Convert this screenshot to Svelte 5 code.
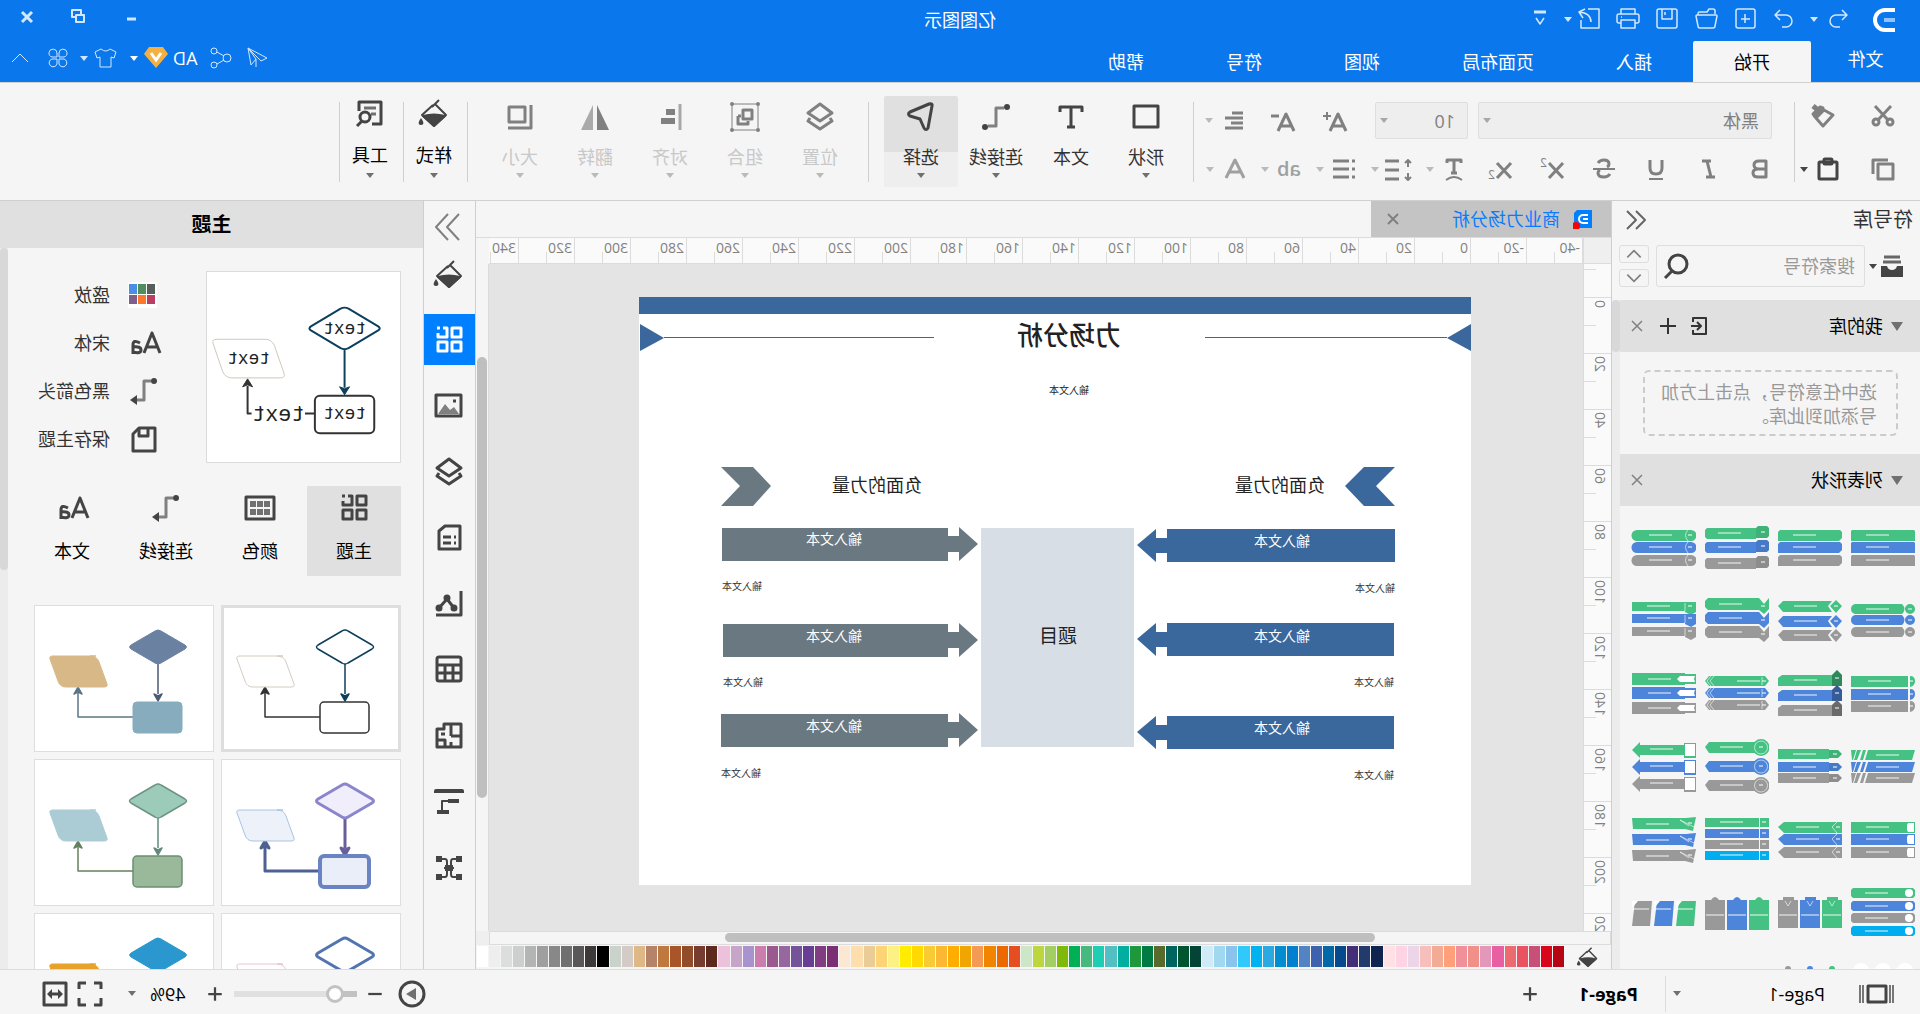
<script>
  const G = "#45c283";
  const B = "#4d85da";
  const N = "#999999";
  const C = "#00aeef";

  const icons = {
    undo: '<path d="M7 3 2 8l5 5M3 8h10a6 6 0 0 1 0 12H9"/>',
    redo: '<path d="m15 3 5 5-5 5M19 8H9a6 6 0 0 0 0 12h4"/>',
    add: '<rect x="2" y="2" width="19" height="19" rx="2"/><path d="M12 7v9M7 12h9"/>',
    folder: '<path d="M3 7V4q0-2 2-2h4l2 3h8q1 0 1 2v1M1 9q0-1 1-1h19q1 0 1 1l-2 10q0 2-2 2H5q-2 0-2-2z"/>',
    save: '<rect x="2" y="2" width="20" height="19" rx="2"/><path d="M7 2v10h10V2M14 5v3"/>',
    print: '<path d="M5 7V2h14v5M5 16H3q-2 0-2-2V9q0-2 2-2h18q2 0 2 2v5q0 2-2 2h-2"/><rect x="5" y="13" width="14" height="8"/><path d="M18 10h1"/>',
    export: '<path d="M13 2H2v19h18V13M16 2l6 3-4 6M22 5Q10 6 10 15"/>',
    more: '<path d="M6 5h12" stroke-width="3"/><path d="m8 11 4 6 4-6"/>',
    min: '<path d="M7 14h9" stroke-width="3"/>',
    restore: '<path d="M10 9V5h9v7h-4" stroke-width="2"/><rect x="7" y="10" width="8" height="7" stroke-width="2"/>',
    close: '<path d="m7 7 10 10M17 7 7 17"/>',
    send: '<path d="M21 2 2 12l6 3zM21 2l-3 17-5-6v8M13 13l8-11"/>',
    share: '<circle cx="6" cy="12" r="4"/><circle cx="19" cy="5" r="3"/><circle cx="19" cy="19" r="3"/><path d="m9 10 7-4M9 14l7 4"/>',
    shirt: '<path d="M8 3 2 6l2 6 3-1v10h11V11l3 1 2-6-6-3q-5 4-9 0z"/>',
    apps: '<path d="M11 11H6a4 4 0 1 1 5-4zM13 11V7a4 4 0 1 1 5 4zM11 13v5a4 4 0 1 1-5-5zM13 13h5a4 4 0 1 1-5 5z"/>',
    up: '<path d="m4 16 8-8 8 8"/>',
    down: '<path d="m4 8 8 8 8-8"/>',
    cut: '<path d="m4 3 13 14M20 3 7 17"/><circle cx="5" cy="19" r="3"/><circle cx="19" cy="19" r="3"/>',
    copy: '<rect x="2" y="7" width="15" height="15"/><path d="M7 3h15v14"/>',
    brush: '<path d="m2 12 9-5 8 8-7 8z"/><path d="m17 7 5-4" stroke-width="5"/><path d="m12 5 8 9 2-3-7-7z" fill="currentColor"/>',
    paste: '<rect x="3" y="5" width="18" height="17" rx="1"/><rect x="8" y="2" width="8" height="5" rx="1"/>',
    bold: '<path d="M6 4h7q5 0 5 4t-5 4H6zM6 12h8q5 0 5 4t-5 4H6z"/>',
    italic: '<path d="M9 4h9M5 20h9M13 4 9 20"/>',
    underline: '<path d="M6 3v8q0 6 6 6t6-6V3"/><path d="M5 22h14" stroke-width="2"/>',
    strike: '<path d="M18 6q-2-3-6-3-5 0-5 4 0 2 2 3M6 17q2 3 6 3 6 0 6-4 0-2-2-3"/><path d="M1 12h22" stroke-width="2"/>',
    cross: '<path d="m1 6 14 15M15 6 1 21"/>',
    textArc: '<path d="M5 6V3h14v3M12 3v13M9 16h6"/><path d="M4 23q8-6 16 0" stroke-width="2"/>',
    spacing: '<path d="M12 4h14M12 13h14M12 22h14"/><path d="M3 3v7M3 16v7M0 6l3-3 3 3M0 20l3 3 3-3" stroke-width="2"/>',
    bullets: '<path d="M7 4h16M7 12h16M7 20h16"/><path d="M1 4h3M1 12h3M1 20h3"/>',
    alignText: '<path d="M2 4h11M2 9h18M2 14h12M2 19h18"/>',
    letter: '<path d="m2 21 9-18 9 18M6 15h10"/>',
    bigger: '<path d="m1 22 8-17 8 17M4 17h10"/><path d="M16 7h8M20 3v8" stroke-width="2"/>',
    smaller: '<path d="m1 22 8-17 8 17M4 17h10"/><path d="M16 7h8"/>',
    shape: '<rect x="2" y="3" width="24" height="21"/>',
    text: '<path d="M3 9V4h22v5M14 4v20M10 24h8"/>',
    connector: '<path d="M6 5h8v18h8" stroke="#808080"/><circle cx="3" cy="4" r="3" fill="currentColor" stroke="none"/><circle cx="25" cy="24" r="3" fill="currentColor" stroke="none"/>',
    select: '<path d="M3 3 7 25q2 3 4 0l4-9 10-3q3-2 0-4L6 1q-4-1-3 2z"/>',
    layer: '<path d="m14 1 12 9-12 8L2 10z"/><path d="m4 15-2 3 12 8 12-8-2-3"/>',
    group: '<rect x="1" y="1" width="26" height="26" stroke-width="1"/><g fill="#f5f5f5" stroke-width="2"><circle cx="1" cy="1" r="1"/><circle cx="27" cy="1" r="1"/><circle cx="1" cy="27" r="1"/><circle cx="27" cy="27" r="1"/></g><rect x="7" y="7" width="9" height="9"/><path d="M21 13v8H11v-3M18 13h3"/>',
    align: '<path d="M4 1v26" stroke="#a8a8a8"/><path d="M9 9h9M9 18h14" stroke-width="6"/>',
    flip: '<path d="M0 27 12 2v25z" fill="currentColor" stroke="none"/><path d="M28 27 16 2v25z" fill="#aaaaaa" stroke="none"/>',
    size: '<rect x="9" y="4" width="16" height="15"/><path d="M3 2v23h23"/>',
    bucket: '<g stroke-width="2"><path d="M9 1l7 7M13 5 2 16l12 11 12-11L15 6"/><path d="M3 17q11-3 22 0L14 27z" fill="currentColor"/></g><path d="M27 19q5 7 0 7t0-7z" fill="currentColor" stroke="none"/>',
    tools: '<path d="M12 25H3V3h22v9"/><path d="M8 9h12M8 15h5" stroke="#707070"/><circle cx="19" cy="18" r="5"/><path d="m22 22 5 5"/>',
    library: '<path d="M4 3h16M3 8h18" stroke="#666666"/><path d="M1 12h6q1 4 5 4t5-4h6v11H1z" fill="currentColor" stroke="none"/>',
    search: '<circle cx="11" cy="10" r="9"/><path d="m17 17 7 7"/>',
    left2: '<path d="m12 3-9 9 9 9M21 3l-9 9 9 9"/>',
    right2: '<path d="m4 1 12 13L4 27M15 1l12 13-12 13"/>',
    importLib: '<path d="M18 8V4H5v16h13v-4M20 12h-9M14 8l-4 4 4 4"/>',
    thinPlus: '<path d="M12 4v16M4 12h16"/>',
    plus: '<path d="M12 3v18M3 12h18"/>',
    minus: '<path d="M3 12h18"/>',
    grid4: '<rect x="2" y="2" width="9" height="9"/><rect x="2" y="16" width="9" height="9"/><rect x="16" y="16" width="9" height="9"/><path d="M20 2h-4v9h9V7M23 2h3"/>',
    picture: '<rect x="2" y="3" width="25" height="21"/><path d="m4 22 5-7 4 3 5-6 7 10z" fill="#808080" stroke="none"/><path d="M7 9h3"/>',
    doc: '<path d="M3 2h15l6 5v18H3z"/><path d="M7 13h2M12 13h8M7 19h2M12 19h8"/>',
    chart: '<path d="M2 1v24h25"/><path d="m9 18 7-9 8 9"/><g fill="currentColor"><circle cx="9" cy="18" r="2"/><circle cx="16" cy="8" r="2"/><circle cx="24" cy="18" r="2"/></g>',
    table: '<rect x="2" y="1" width="24" height="24" rx="2"/><path d="M2 9h24M2 17h24M10 9v16M18 9v16"/>',
    plan: '<path d="M2 2h17v5h7v18H2zM12 2v12M2 14h10M12 20v5M18 25v-7h8M18 12h4"/>',
    org: '<path d="M1 5V3h26v2" stroke-width="4"/><path d="M4 13h11M14 24h12" stroke-width="4"/><path d="M15 13h6v10" stroke-width="2"/>',
    network: '<path d="M7 5h3q2 0 2 3v12q0 3-2 3H7M21 5h-3q-2 0-2 3v12q0 3 2 3h3M9 14h10" stroke-width="2"/><path d="M1 5h6M1 23h6M21 5h6M21 23h6M10 14h8" stroke-width="6"/>',
    connArrow: '<path d="M7 4h7v19h7" stroke="#808080"/><circle cx="4" cy="4" r="3" fill="currentColor" stroke="none"/><path d="m21 18 7 5-7 5z" fill="currentColor" stroke="none"/>',
    fontAa: '<path d="m-2 24 8-20 8 20M1 18h10M18 14q7-4 7 2v9M25 18q-8-1-8 3t8 2"/>',
    saveTheme: '<path d="M3 3h16l6 6v17H3z"/><path d="M10 3v8h9V3"/>',
    swatches: '<rect x="1" y="1" width="29" height="26" fill="#ffffff" stroke="none"/><g stroke="none"><path d="M3 3h8v10H3z" fill="#555f5e"/><path d="M12 3h8v10h-8z" fill="#4e8f5b"/><path d="M21 3h8v10h-8z" fill="#4a90e2"/><path d="M3 14h8v9H3z" fill="#b83f63"/><path d="M12 14h8v9h-8z" fill="#fb782c"/><path d="M21 14h8v9h-8z" fill="#80608b"/></g>',
    colorGrid: '<rect x="0" y="3" width="28" height="22"/><path d="M4 7h6v6H4zM11 7h6v6h-6zM18 7h6v6h-6zM4 15h6v6H4zM11 15h6v6h-6zM18 15h6v6h-6z" fill="#707070" stroke="none"/>',
    pages: '<rect x="8" y="3" width="18" height="16"/><path d="M1 2v18M4 2v18M31 2v18M34 2v18" stroke-width="2" stroke="#777777"/>',
    play: '<circle cx="14" cy="14" r="12"/><path d="m10 8 10 6-10 6z" fill="#707070" stroke="none"/>',
    full: '<path d="M3 9V3h7M18 3h7v6M25 18v7h-7M10 25H3v-7"/>',
    fit: '<rect x="3" y="3" width="22" height="22"/><path d="M8 14h12"/><path d="m6 14 5-5v10zM22 14l-5-5v10z" fill="currentColor" stroke="none"/>',
  };

  const quick = ["add", "folder", "save", "print", "export"];
  const tabs = ["开始", "插入", "页面布局", "视图", "符号", "帮助"];
  const formats = [
    ["bold", "加粗"],
    ["italic", "斜体"],
    ["underline", "下划线"],
    ["strike", "删除线"],
    ["super", "上标"],
    ["sub", "下标"],
  ];
  const dropFormats = [
    ["textArc", "文本弧形"],
    ["spacing", "行距"],
    ["bullets", "项目符号"],
    ["ab", "突出显示"],
    ["letter", "字体颜色"],
  ];
  const drawTools = [
    ["shape", "形状", true],
    ["text", "文本", false],
    ["connector", "连接线", true],
    ["select", "选择", true],
  ];
  const arrangeTools = [
    ["layer", "位置"],
    ["group", "组合"],
    ["align", "对齐"],
    ["flip", "翻转"],
    ["size", "大小"],
  ];
  const sideTools = ["bucket", "grid4", "picture", "layer", "doc", "chart", "table", "plan", "org", "network"];
  const themeOptions = [
    ["swatches", "盛放"],
    ["fontAa", "宋体"],
    ["connArrow", "黑色箭头"],
    ["saveTheme", "保存主题"],
  ];
  const themeTabs = [
    ["grid4", "主题"],
    ["colorGrid", "颜色"],
    ["connArrow", "连接线"],
    ["fontAa", "文本"],
  ];

  const themes = [
    { d: ["#fff", "#0b3f5c", 1.5], b: ["#fff", "#333", 1.5], p: ["#fff", "#d3ccc0", 1], l1: "#0b3f5c", l2: "#333", w: 1.5 },
    { d: ["#6a81a1", "#6a81a1", 1], b: ["#86acbe", "#86acbe", 1], p: ["#d8b886", "#d8b886", 1], l1: "#4b5a75", l2: "#5b7587", w: 1.5 },
    { d: ["#f0eefa", "#8b86cb", 3], b: ["#eaeef8", "#6a83c3", 4], p: ["#ecf1fa", "#a9c4e0", 1], l1: "#675f9b", l2: "#4d6193", w: 3 },
    { d: ["#9dcbba", "#6c9484", 1.5], b: ["#9ab89a", "#6b8f73", 1.5], p: ["#abccd4", "#abccd4", 1], l1: "#628a7b", l2: "#64805f", w: 1.5 },
    { d: ["#fff", "#5474b0", 3], b: ["#fff", "#5474b0", 3], p: ["#fff", "#e8c4cb", 1], l1: "#5474b0", l2: "#5474b0", w: 2 },
    { d: ["#2a98cf", "#2a98cf", 1], b: ["#2a98cf", "#2a98cf", 1], p: ["#e8a22a", "#e8a22a", 1], l1: "#333", l2: "#333", w: 1.5 },
  ];

  const topLabels = Array.from({ length: 20 }, (_, i) => i * 20 - 40);
  const sideLabels = Array.from({ length: 13 }, (_, i) => (i ? (i - 1) * 20 : ""));

  const swatches =
    "b50515 d9061b c74f78 ea5262 ec6b70 e85fa2 e398b9 f09088 f0909b ffa07a f2ab94 f6bfbc ecd5e8 fed4e4 ffe0e5 0f2350 233b6c 432f78 06498c 0268a8 3e62ad 5383c3 0180d0 018dd0 2ca9e1 00b3f0 30c9f9 8ac3ec a0d8ef d0ebf7 034437 00552e 00645f 586b2c 007b43 1f983c 00af9f 53bfc2 1eceb2 47b97f 00b055 7fba0b a3cf62 bcd63e cde6c7 e44e20 ec6800 f18500 f39a54 f0a500 ffae00 fcb833 f8ca34 ffd900 ffec00 fdf183 fcd475 eacd96 ffdead fce8d2 7a3073 813d82 683d94 745399 97679f 9b5a8d cb7dae a893ce c6a5c9 ebc2da 5c2a1c 763c2f 914c29 a8552a bf783e b48369 deb887 d4cbc6 cad3cb 000000 3d3938 595757 6f6f6f 888888 9e9f9e b3b5b5 cdcfce dcdddd eeeeee ffffff"
      .split(" ")
      .map((hex) => "#" + hex);

  // each symbol repeats one bar (or card) at the listed positions
  const col = (...ys) => ys.map((y) => [0, y]);
  const row = (y) => [[0, y], [22, y], [44, y]];
  const symbols = [
    { at: col(14, 26, 39), fill: "M1 0h62l1 1v10H0V1z", text: [26, 5] },
    { at: col(14, 26, 39), fill: "M2 0h60l2 2v9H3L0 8V2z", text: [26, 5] },
    { at: col(12, 26, 42), fill: "M13 0h49l2 2v7l-2 2H13z", dark: "M2-2h9l2 2v10H2L0 8V0z", text: [28, 5], tag: [4, 4] },
    { at: col(14, 26, 39), fill: "M5 0h54a5 5 0 0 1 0 11H5A5 5 0 0 1 5 0z", line: "M8 0q5 5 0 11", text: [24, 5], tag: [4, 5] },
    { at: col(15, 26, 38), fill: "M5 0a4 4 0 1 1 0 10A4 4 0 1 1 5 0zM13 0h47q4 1 4 5t-4 5H13q-5-5 0-10z", text: [26, 5], tag: [3, 5] },
    { at: col(12, 27, 41), fill: "M6-1l6 6-6 7-6-7zM10 0h49l5 5-5 6H10l4-6z", text: [25, 5], tag: [4, 5] },
    { at: col(10, 24, 38), fill: "M0-1l5 6 5-6h51l3 3v6l-3 3H10l-5 4-5-5z", text: [27, 5], tag: [4, 7] },
    { at: col(13, 25, 38), fill: "M0 0h64v9H11v1l-6 3-5-3z", line: "M11 1v8", text: [26, 4], tag: [4, 4] },
    { at: col(14, 27, 39), fill: "M5 0v11Q0 10 0 5T5 0zM7 0h57v11H7z", text: [24, 5], tag: [2, 5] },
    { at: col(13, 28, 43), fill: "M10 0h50l4 3v8H10z", shade: "M0 0l5-5 5 5v11H0z", text: [25, 5], tag: [3, 3] },
    { at: col(14, 26, 38), fill: "M4 0h56l4 5-4 5H4L0 5z", line: "M7 1v8M58 0l4 5-4 5M55 0l4 5-4 5", text: [9, 5], tag: [3, 5] },
    { at: col(11, 25, 40), fill: "M11 0h53v12H11v-1H0V1h11z", white: "M1 3h15l3 3-3 3H1l1-3z", text: [25, 6] },
    { at: col(15, 27, 38), fill: "M0 0h47l3 10H3zM49 0h3l3 10h-3zM54 0h4l3 10h-3zM59 0h5l-1 10h-1z", text: [16, 5] },
    { at: col(14, 27, 38), fill: "M13 0h51v10H13z", dark: "M0 5l4-4h9v8H4z", text: [26, 5], tag: [5, 5] },
    { at: col(7, 26, 45), fill: "M8 0h52l4 5-4 6H8zM8-3a8 8 0 1 1 0 17A8 8 0 1 1 8-3z", line: "M8-1a6 6 0 1 1 0 13A6 6 0 1 1 8-1z", text: [26, 5], tag: [6, 5] },
    { at: col(9, 26, 43), fill: "M0-1h12v2h44v-3l8 8-8 8v-3H12v3H0z", white: "M1 0h10v12H1z", text: [23, 5] },
    { at: col(14, 26, 39), fill: "M0 0h64v11H0z", white: "M1 1h6l1 2v5l-1 2H1z", text: [26, 5] },
    { at: col(14, 26, 39), fill: "M0 0h58l6 5-6 6H0z", line: "M5 0l5 5-5 6", text: [23, 5], tag: [2, 5] },
    { at: col(10, 21, 32, 43), fill: "M0 0h9v9H0zM10 0h54v9H10z", text: [26, 4], tag: [3, 4] },
    { at: col(10, 26, 42), fill: "M0-1l10 1h54l-1 11H11l-8 2z", line: "M2 9l14-7-9 6", text: [27, 6], tag: [4, 5] },
    { at: col(7, 20, 32, 45), fill: "M2 0h60l2 2v6l-2 2H2L0 8V2z", white: "M6 1a4 4 0 1 1 0 8A4 4 0 1 1 6 1z", text: [27, 5] },
    { at: row(19), fill: "M0 0h4v-3h11v3h5v28H0z", line: "M7 1l3 5 3-5", text: [1, 15] },
    { at: row(19), fill: "M0 0h6q4-6 8 0h6v30H0z", text: [1, 15] },
    { at: row(20), fill: "M0 0h17l3 25H2z", white: "M14 0h6v7z", text: [3, 8] },
    { at: row(9), fill: "M10 0a8 8 0 1 1 0 17A8 8 0 1 1 10 0z", colors: ["#fff", "#fff", "#fff"], text: [4, 6] },
    { at: row(12), fill: "M10 0a3 3 0 1 1 0 6A3 3 0 1 1 10 0z" },
  ];
  const palette = [G, B, N, C];

  // force-field rows: x, y of the band, y of its text, y of the caption
  const blueRows = [
    [76, 232, 249, 295],
    [77, 326, 344, 389],
    [77, 419, 436, 482],
  ];
  const greyRows = [
    [749, 231, 247, 293],
    [748, 327, 344, 389],
    [750, 417, 434, 480],
  ];

  let zoom = $state(13);
  let keyword = $state("");
</script>

{#snippet icon(name, size = 24, w = 2, width = size)}
  <svg
    class="icon"
    {width}
    height={size}
    viewBox="0 0 {width} {size}"
    fill="none"
    stroke="currentColor"
    stroke-width={w}
    stroke-linejoin="round"
    aria-hidden="true">{@html icons[name]}</svg>
{/snippet}

{#snippet caret()}
  <svg class="caret" width="8" height="5" viewBox="0 0 8 5" aria-hidden="true"><path d="M0 0h8L4 5z" /></svg>
{/snippet}

{#snippet flow(t)}
  <svg class="flow" viewBox="0 0 180 147" fill="none" stroke-linejoin="round" aria-hidden="true">
    <path d="M56 59v30" stroke={t.l1} stroke-width={t.w} />
    <path d="M52 89l4 2 4-2-4 7z" fill={t.l1} stroke={t.l1} stroke-width={t.w} />
    <path d="M81 112h55V88" stroke={t.l2} stroke-width={t.w} />
    <path d="M132 89l4-7 4 7-4-2z" fill={t.l2} stroke={t.l2} stroke-width={t.w} />
    <path d="M53 26q3-2 6 0l24 14q3 2 0 4L59 58q-3 2-6 0L29 44q-3-2 0-4z" fill={t.d[0]} stroke={t.d[1]} stroke-width={t.d[2]} />
    <rect x="32" y="97" width="49" height="31" rx="4" fill={t.b[0]} stroke={t.b[1]} stroke-width={t.b[2]} />
    <path d="M118 51h43q4 0 3 3l-8 22q-2 6-8 6h-38q-4 0-3-3l8-22q2-6 9-6z" fill={t.p[0]} stroke={t.p[1]} stroke-width={t.p[2]} />
  </svg>
{/snippet}

<div class="app">
  <header>
    <div class="titlebar">
      <svg class="logo" width="24" height="24" viewBox="0 0 24 24" fill="none" aria-hidden="true">
        <path d="M1 2h10a10 10 0 0 1 0 20H1" stroke="#fff" stroke-width="4" />
        <path d="M1 12h11" stroke="#8fc3fb" stroke-width="4" />
      </svg>
      <div class="quick">
        <button aria-label="撤销">{@render icon("undo", 24, 1.5)}</button>
        <button aria-label="撤销列表" class="drop">{@render caret()}</button>
        <button aria-label="恢复">{@render icon("redo", 24, 1.5)}</button>
        <div class="files">
          {#each quick as name}
            <button aria-label={name}>{@render icon(name, 24, 1.5)}</button>
          {/each}
        </div>
        <button aria-label="导出列表">{@render caret()}</button>
        <button aria-label="自定义">{@render icon("more", 24, 1.5)}</button>
      </div>
      <h1>亿图图示</h1>
      <div class="window">
        <button aria-label="最小化">{@render icon("min")}</button>
        <button aria-label="还原">{@render icon("restore")}</button>
        <button aria-label="关闭">{@render icon("close", 24, 3)}</button>
      </div>
    </div>

    <nav>
      <button class="file">文件</button>
      {#each tabs as tab, i}
        <button class="tab" class:active={i === 0}>{tab}</button>
      {/each}
      <div class="account">
        <button aria-label="发送">{@render icon("send", 24, 1)}</button>
        <button aria-label="分享">{@render icon("share", 24, 1)}</button>
        <button class="user">
          AD
          <svg width="24" height="22" viewBox="0 0 24 22" aria-hidden="true">
            <path d="M5 0h14l5 7-12 14L0 7z" fill="#f5b041" />
            <path d="m7 6 5 7 5-7" fill="none" stroke="#fff" stroke-width="3" />
          </svg>
          {@render caret()}
        </button>
        <button class="skin" aria-label="皮肤">{@render icon("shirt", 24, 1)}{@render caret()}</button>
        <button class="more-apps" aria-label="应用">{@render icon("apps", 24, 1)}</button>
        <button aria-label="收起功能区">{@render icon("up", 24, 1)}</button>
      </div>
    </nav>
  </header>

  <div class="ribbon">
    <div class="clipboard">
      <button aria-label="剪切">{@render icon("cut", 24, 3)}</button>
      <button aria-label="格式刷" class="second format">{@render icon("brush", 24, 3)}</button>
      <button aria-label="复制">{@render icon("copy", 24, 3)}</button>
      <button aria-label="粘贴" class="second dark">{@render icon("paste", 24, 3)}{@render caret()}</button>
    </div>
    <div class="fonts">
      <div class="line">
        <label class="select wide">
          <select aria-label="字体"><option>黑体</option></select>
          {@render caret()}
        </label>
        <label class="select">
          <select aria-label="字号"><option>10</option></select>
          {@render caret()}
        </label>
        <div class="sizes">
          <button aria-label="增大字号">{@render icon("bigger", 24, 3)}</button>
          <button aria-label="减小字号">{@render icon("smaller", 24, 3)}</button>
          <button aria-label="对齐文本" class="with-caret">{@render icon("alignText", 24, 3)}{@render caret()}</button>
        </div>
      </div>
      <div class="line second-line">
        <div class="simple">
          {#each formats as [name, title]}
            <button aria-label={title}>
              {#if name === "super" || name === "sub"}
                <span class="script" class:sub={name === "sub"}>{@render icon("cross", 24, 3, 17)}<i>2</i></span>
              {:else}
                {@render icon(name, 24, 3)}
              {/if}
            </button>
          {/each}
        </div>
        <div class="drops">
          {#each dropFormats as [name, title], i}
            <button aria-label={title} class="with-caret" class:pale={i > 2}>
              {#if name === "ab"}<b class="ab">ab</b>{:else}{@render icon(name, 24, 3, name === "spacing" ? 28 : 24)}{/if}
              {@render caret()}
            </button>
          {/each}
        </div>
      </div>
    </div>
    <div class="tools">
      {#each drawTools as [name, label, more]}
        <button class="big" class:active={name === "select"}>
          {@render icon(name, 28, 3)}<span>{label}</span>
          {#if more}{@render caret()}{/if}
        </button>
      {/each}
    </div>
    <div class="tools off">
      {#each arrangeTools as [name, label]}
        <button class="big">{@render icon(name, 28, 3)}<span>{label}</span>{@render caret()}</button>
      {/each}
    </div>
    <div class="tools single"><button class="big">{@render icon("bucket", 28, 3)}<span>样式</span>{@render caret()}</button></div>
    <div class="tools single"><button class="big">{@render icon("tools", 28, 3)}<span>工具</span>{@render caret()}</button></div>
  </div>

  <main>
    <aside class="library">
      <div class="lib-title">
        <h2>符号库</h2>
        <button aria-label="收起">{@render icon("left2", 24, 2)}</button>
      </div>
      <div class="lib-search">
        <button class="lib-menu" aria-label="库">{@render icon("library", 24, 3)}{@render caret()}</button>
        <div class="search">
          <input type="text" aria-label="搜索符号" placeholder="搜索符号" bind:value={keyword} />
          <button aria-label="搜索">{@render icon("search", 24, 3)}</button>
        </div>
        <div class="spin">
          <button aria-label="上一个">{@render icon("up", 24, 2)}</button>
          <button aria-label="下一个">{@render icon("down", 24, 2)}</button>
        </div>
      </div>
      <div class="lib-body">
        <div class="lib-scroll">
          <div class="section">
            <svg width="12" height="9" viewBox="0 0 12 9" aria-hidden="true"><path d="M0 0h12L6 9z" /></svg>
            <h3>我的库</h3>
            <button aria-label="导入">{@render icon("importLib", 24, 2)}</button>
            <button aria-label="添加">{@render icon("thinPlus", 24, 2)}</button>
            <button aria-label="关闭" class="x">{@render icon("close", 24, 1.5)}</button>
          </div>
          <p class="hint">选中任意符号，点击上方加号添加到此库。</p>
          <div class="section">
            <svg width="12" height="9" viewBox="0 0 12 9" aria-hidden="true"><path d="M0 0h12L6 9z" /></svg>
            <h3>列表形状</h3>
            <button aria-label="关闭" class="x">{@render icon("close", 24, 1.5)}</button>
          </div>
          <div class="symbols">
            {#each symbols as s}
              <svg width="65" height="64" viewBox="0 0 65 64" aria-hidden="true">
                {#each s.at as [x, y], i}
                  <g transform="translate({x} {y})" fill={s.colors ? s.colors[i] : palette[i]}>
                    <path d={s.fill} />
                    {#if s.dark}<path d={s.dark} /><path d={s.dark} fill="#000" opacity="0.08" />{/if}
                    {#if s.shade}<path d={s.shade} /><path d={s.shade} fill="#000" opacity="0.3" />{/if}
                    {#if s.white}<path d={s.white} fill="#fff" />{/if}
                    {#if s.line}<path d={s.line} fill="none" stroke="#fff" opacity="0.6" />{/if}
                    {#if s.text}<path d="M{s.text[0]} {s.text[1]}h{s.at[1][0] ? 18 : 23}" stroke="#fff" stroke-width="2" opacity="0.45" />{/if}
                    {#if s.tag}<path d="M{s.tag[0]} {s.tag[1]}h4" stroke="#fff" stroke-width="2" opacity="0.5" />{/if}
                  </g>
                {/each}
              </svg>
            {/each}
          </div>
        </div>
        <div class="lane"><div class="thumb"></div></div>
      </div>
    </aside>

    <section class="center">
      <div class="docs">
        <div class="doc">
          <svg width="20" height="20" viewBox="0 0 20 20" aria-hidden="true">
            <path d="M1 1h15l3 3v15H1z" fill="#0080ff" />
            <path d="M5 6h5a4 4 0 0 1 0 8H5M5 10h5" fill="none" stroke="#fff" stroke-width="2" />
            <circle cx="17" cy="17" r="4" fill="red" />
          </svg>
          <span>商业力场分析</span>
          <button aria-label="关闭文档">{@render icon("close", 24, 2)}</button>
        </div>
      </div>

      <div class="board">
        <div class="corner"></div>
        <div class="ruler-top">
          {#each topLabels as n}<span>{n}</span>{/each}
        </div>
        <div class="corner right"></div>
        <div class="ruler-side">
          {#each sideLabels as n}<div><span>{n}</span></div>{/each}
        </div>
        <div class="canvas">
          <svg class="page" width="832" height="588" viewBox="0 0 832 588">
            <g fill="#3a679c">
              <path d="M0 0h832v17H0zM0 27v27l24-13zM831 27v27l-24-13zM24 40h242v1H24zM537 40h270v1H537z" />
              <path d="M76 170h31l19 19-19 20H76l19-20z" />
              {#each blueRows as [x, y]}
                <path d="M{x} {y}H304v9h11v-9l19 16-19 17v-9h-11v9H{x}z" />
              {/each}
            </g>
            <g fill="#6a7881">
              <path d="M750 170h-32l-18 19 18 20h32l-19-20z" />
              {#each greyRows as [x, y]}
                <path d="M{x} {y}H523v8h-11v-9l-19 17 19 17v-9h11v9H{x}z" />
              {/each}
            </g>
            <rect x="337" y="231" width="153" height="219" fill="#d7dee5" />
            <g text-anchor="middle" fill="#222">
              <text x="402" y="48" font-size="26" font-weight="500">力场分析</text>
              <text x="402" y="97" font-size="10">输入文本</text>
              <text x="191" y="195" font-size="18">负面的力量</text>
              <text x="594" y="195" font-size="18">负面的力量</text>
              <text x="413" y="346" font-size="19">题目</text>
            </g>
            {#each blueRows as [x, , t, c]}
              <text x="189" y={t} text-anchor="middle" font-size="14" fill="#fff">输入文本</text>
              <text {x} y={c} font-size="10" fill="#333">输入文本</text>
            {/each}
            {#each greyRows as [x, , t, c]}
              <text x="637" y={t} text-anchor="middle" font-size="14" fill="#fff">输入文本</text>
              <text {x} y={c} text-anchor="end" font-size="10" fill="#333">输入文本</text>
            {/each}
          </svg>
        </div>
        <div class="vscroll"><div></div></div>
        <div class="hscroll"><div></div></div>
        <div class="corner end"></div>
      </div>

      <div class="palette">
        <button aria-label="填充">{@render icon("bucket", 28, 3)}</button>
        {#each swatches as color}<i style="background: {color}"></i>{/each}
      </div>
    </section>

    <div class="side-tools">
      <button class="collapse" aria-label="收起">{@render icon("right2", 28, 2)}</button>
      {#each sideTools as name, i}
        <button class:active={i === 1} aria-label={name}>{@render icon(name, 28, 3)}</button>
      {/each}
    </div>

    <aside class="theme">
      <h2>主题</h2>
      <div class="theme-body">
        <div class="theme-scroll">
          <div class="current">
            <svg width="195" height="192" viewBox="0 0 195 192" fill="none" stroke-linejoin="round">
              <path d="M52 37q4-2 8 0l30 18q3 2 0 4L60 77q-4 2-8 0L22 59q-3-2 0-4zM56 79v38" stroke="#0b3f5c" stroke-width="2" />
              <path d="m51 116 5 2 5-2-5 8z" fill="#0b3f5c" stroke="#0b3f5c" />
              <rect x="26" y="125" width="60" height="38" rx="5" stroke="#333" stroke-width="2" />
              <path d="M136 68h49q5 0 4 4l-10 29q-3 6-9 6h-49q-5 0-4-4l10-29q3-6 9-6z" stroke="#cfc7b9" />
              <path d="M86 143h10M150 143h4v-28" stroke="#333" stroke-width="2" />
              <path d="m149 116 5-8 5 8-5-2z" fill="#333" stroke="#333" />
              <g font-family="Liberation Mono, monospace" font-size="18" fill="#222" text-anchor="middle">
                <text x="56" y="63">text</text>
                <text x="56" y="149">text</text>
                <text x="153" y="93">text</text>
                <text x="123" y="151" font-size="22">text</text>
              </g>
            </svg>
            <div class="options">
              {#each themeOptions as [name, label]}
                <button>{@render icon(name, 28, 3)}<span>{label}</span></button>
              {/each}
            </div>
          </div>
          <div class="theme-tabs">
            {#each themeTabs as [name, label], i}
              <button class:active={i === 0}>{@render icon(name, 28, 3)}<span>{label}</span></button>
            {/each}
          </div>
          <div class="cards">
            {#each themes as t, i}
              <button class="card" class:active={i === 0} aria-label="主题 {i + 1}">{@render flow(t)}</button>
            {/each}
          </div>
        </div>
        <div class="lane"><div class="thumb"></div></div>
      </div>
    </aside>
  </main>

  <footer>
    <button class="page-view" aria-label="页面视图">{@render icon("pages", 22, 3, 35)}</button>
    <button class="page-pick">Page-1{@render caret()}</button>
    <button class="page-tab">Page-1</button>
    <button class="page-add" aria-label="新建页">{@render icon("plus", 24, 3)}</button>
    <div class="zoom">
      <button aria-label="演示">{@render icon("play", 28, 3)}</button>
      <button class="out" aria-label="缩小">{@render icon("minus", 24, 3)}</button>
      <input type="range" aria-label="缩放" min="0" max="100" bind:value={zoom} />
      <button class="in" aria-label="放大">{@render icon("plus", 24, 3)}</button>
      <button class="percent">49%{@render caret()}</button>
      <button class="full" aria-label="全屏">{@render icon("full", 28, 3)}</button>
      <button aria-label="适合宽度">{@render icon("fit", 28, 3)}</button>
    </div>
  </footer>
</div>

<style>
  :global(body) {
    margin: 0;
    background: #f5f5f5;
  }

  .app {
    display: flex;
    flex-direction: column;
    height: 100vh;
    overflow: hidden;
    transform: scaleX(-1);
    background: #f5f5f5;
    color: #000;
    font: 18px/24px "Open Sans", "Noto Sans CJK SC", sans-serif;
  }

  .app :global(*) {
    box-sizing: border-box;
  }

  button {
    display: flex;
    align-items: center;
    flex: none;
    padding: 0;
    border: 0;
    background: none;
    color: inherit;
    font: inherit;
    white-space: nowrap;
  }

  h1,
  h2,
  h3,
  p {
    margin: 0;
    font-size: 18px;
    font-weight: 400;
  }

  svg {
    display: block;
    flex: none;
  }

  .icon {
    overflow: visible;
  }

  .caret {
    fill: currentColor;
  }

  /* header */
  header {
    flex: none;
    height: 83px;
    border-bottom: 1px solid #d0d0d0;
    background: #0a77ec;
    color: #fff;
  }

  .titlebar {
    display: grid;
    grid-template-columns: 1fr auto 1fr;
    grid-template-rows: 40px;
    align-items: center;
  }

  .logo,
  .quick {
    grid-area: 1 / 1;
  }

  .logo {
    margin-left: 24px;
  }

  .quick {
    display: flex;
    align-items: center;
    gap: 9px;
    margin-left: 71px;
    padding-bottom: 2px;
    color: #d2e8ff;
  }

  .drop {
    margin: 0 6px 0 -2px;
  }

  .files {
    display: flex;
    gap: 15px;
    margin: 0 -4px 0 5px;
  }

  .quick > :last-child {
    margin-left: 3px;
  }

  h1 {
    grid-area: 1 / 2;
  }

  .window {
    grid-area: 1 / 3;
    display: flex;
    justify-content: flex-end;
    gap: 28px;
    padding: 0 15px 6px 0;
    color: #d2e8ff;
  }

  nav {
    display: flex;
    height: 42px;
  }

  .file {
    justify-content: center;
    width: 109px;
    padding-bottom: 4px;
  }

  .tab {
    margin-top: 1px;
    padding: 0 41px;
  }

  .tab.active {
    border-radius: 2px 2px 0 0;
    background: #f5f5f5;
    color: #000;
  }

  .account {
    display: flex;
    align-items: center;
    gap: 12px;
    margin-left: auto;
    padding: 0 8px 6px 0;
    color: #d2e8ff;
  }

  .user {
    gap: 5px;
    color: #fff;
  }

  .user .caret {
    margin: 0 0 0 1px;
  }

  .skin {
    gap: 6px;
  }

  .more-apps {
    margin: 0 2px 0 -2px;
  }

  /* ribbon */
  .ribbon {
    display: flex;
    flex: none;
    height: 118px;
    padding-top: 19px;
    border-bottom: 1px solid #d0d0d0;
    color: #808080;
  }

  .ribbon > div {
    flex: none;
    height: 80px;
    border-right: 1px solid #cfcfcf;
  }

  .clipboard {
    display: grid;
    grid-template: 54px 54px / 60px 58px;
    align-content: center;
    padding-left: 7px;
  }

  .clipboard button {
    justify-content: center;
  }

  .clipboard .second {
    justify-content: flex-start;
    gap: 8px;
    padding-left: 13px;
  }

  .clipboard .format {
    padding-left: 18px;
  }

  .dark {
    color: #444;
  }

  .fonts {
    width: 601px;
    padding-left: 22px;
  }

  .line {
    display: flex;
    align-items: center;
    gap: 10px;
    height: 37px;
  }

  .second-line {
    gap: 22px;
    height: 30px;
    margin-top: 15px;
  }

  .select {
    display: grid;
    align-items: center;
    width: 93px;
    height: 37px;
    color: #a8a8a8;
  }

  .select.wide {
    width: 294px;
  }

  .select > :global(*) {
    grid-area: 1 / 1;
  }

  .select .caret {
    justify-self: end;
    margin-right: 5px;
  }

  select {
    appearance: none;
    width: 100%;
    height: 100%;
    padding: 0 12px;
    border: 1px solid #dedede;
    border-radius: 2px;
    background: #eee;
    color: #808080;
    font: inherit;
  }

  .sizes {
    display: flex;
    gap: 28px;
    margin-left: 18px;
  }

  .with-caret {
    gap: 8px;
    width: 40px;
  }

  .with-caret .caret {
    fill: #bababa;
    margin-left: auto;
  }

  .sizes .with-caret {
    margin-left: -2px;
  }

  .simple {
    display: flex;
    gap: 28px;
  }

  .drops {
    display: flex;
    gap: 15px;
  }

  .pale {
    color: #a0a0a0;
  }

  .with-caret .icon,
  .ab {
    margin-right: -8px;
  }

  .ab {
    font-size: 20px;
    font-weight: 600;
  }

  .script {
    display: flex;
    align-items: flex-start;
    width: 24px;
  }

  .script i {
    font: 12px/12px "Open Sans", sans-serif;
  }

  .script.sub i {
    align-self: flex-end;
  }

  .tools {
    display: flex;
    gap: 1px;
    padding: 0 15px 0 10px;
    color: #444;
  }

  .tools.off {
    padding-left: 11px;
    color: #808080;
  }

  .big {
    flex-direction: column;
    width: 74px;
    height: 91px;
    margin-top: -6px;
    padding-top: 7px;
    border-radius: 2px;
  }

  .big span {
    margin: 14px 0 4px;
    color: #333;
  }

  .off .big span {
    color: #c8c8c8;
  }

  .big .caret {
    fill: #707070;
  }

  .off .big .caret {
    fill: #bababa;
  }

  .big.active {
    background: linear-gradient(#e0e0e0 56px, #eee 56px);
  }

  .tools.single {
    width: 64px;
    padding: 0 0 0 3px;
  }

  .single .big {
    width: 60px;
    padding-top: 3px;
  }

  .single .big span {
    margin: 16px 0 6px;
    color: #000;
  }

  /* body */
  main {
    display: flex;
    flex: 1;
    min-height: 0;
  }

  .library {
    display: flex;
    flex-direction: column;
    flex: none;
    width: 309px;
    border-right: 1px solid #cfcfcf;
  }

  .lib-title {
    display: flex;
    align-items: center;
    justify-content: space-between;
    height: 38px;
    padding: 0 12px 0 7px;
    color: #666;
  }

  .lib-title h2 {
    font-size: 20px;
    color: #333;
  }

  .lib-search {
    display: flex;
    gap: 4px;
    height: 61px;
    padding: 6px 7px 13px 16px;
  }

  .lib-menu {
    gap: 3px;
    width: 35px;
    color: #444;
  }

  .search {
    display: flex;
    align-items: center;
    width: 209px;
    padding-right: 8px;
    border: 1px solid #dedede;
    border-radius: 3px;
    color: #444;
  }

  input[type="text"] {
    flex: 1;
    min-width: 0;
    padding: 0 9px;
    border: 0;
    background: none;
    font: inherit;
  }

  input::placeholder {
    color: #9a9a9a;
  }

  .spin {
    display: flex;
    flex-direction: column;
    justify-content: space-between;
    width: 30px;
    margin-left: 3px;
    color: #808080;
  }

  .spin button {
    justify-content: center;
    height: 18px;
    border: 1px solid #dedede;
    border-radius: 3px;
  }

  .spin .icon {
    width: 20px;
    height: 20px;
  }

  .lib-body,
  .theme-body {
    display: flex;
    flex: 1;
    min-height: 0;
  }

  .lib-scroll,
  .theme-scroll {
    flex: 1;
    overflow: hidden;
  }

  .lane {
    flex: none;
    width: 8px;
    background: #ececec;
  }

  .lane .thumb {
    height: 52px;
    border-radius: 4px;
    background: #d8d8d8;
  }

  .theme .thumb {
    height: 322px;
  }

  .section {
    display: flex;
    align-items: center;
    gap: 7px;
    height: 52px;
    padding: 0 5px 0 17px;
    background: #e0e0e0;
    color: #333;
  }

  .section > svg {
    fill: #707070;
  }

  .section h3 {
    margin-right: auto;
    padding-left: 1px;
    color: #000;
  }

  .x {
    color: #808080;
  }

  .hint {
    margin: 18px 23px 18px 22px;
    padding: 8px 10px 6px 19px;
    border: 2px dashed #cbcbcb;
    border-radius: 6px;
    color: #999;
  }

  .symbols {
    display: grid;
    grid-template-columns: repeat(4, 65px);
    gap: 9px 8px;
    padding: 10px 0 0 5px;
  }

  .center {
    display: flex;
    flex-direction: column;
    flex: 1;
    min-width: 0;
    border-right: 1px solid #cfcfcf;
  }

  .docs {
    flex: none;
    height: 37px;
    border-bottom: 1px solid #dcdcdc;
  }

  .doc {
    display: flex;
    align-items: center;
    width: 240px;
    height: 36px;
    padding: 0 10px 0 18px;
    background: #c4c4c4;
    color: #0a7bff;
  }

  .doc span {
    margin: 0 auto 0 13px;
  }

  .doc button {
    color: #808080;
  }

  .board {
    display: grid;
    grid-template: 26px 1fr 14px / 28px 1fr 13px;
    flex: 1;
    min-height: 0;
    color: #808080;
    font-size: 14px;
    line-height: 20px;
  }

  .corner {
    border-right: 1px solid #dcdcdc;
    border-bottom: 1px solid #dcdcdc;
    background: #efefef;
  }

  .corner.right {
    border: 0;
    background: #f5f5f5;
  }

  .corner.end {
    border: 0;
  }

  .ruler-top {
    display: flex;
    overflow: hidden;
    border-bottom: 1px solid #dcdcdc;
    background: #fafafa;
  }

  .ruler-top span {
    flex: none;
    width: 56px;
    padding-left: 2px;
    border-left: 1px solid #dcdcdc;
    background: linear-gradient(#dcdcdc, #dcdcdc) 27px 100% / 1px 11px no-repeat;
  }

  .ruler-side {
    overflow: hidden;
    border-right: 1px solid #dcdcdc;
    background: #fafafa;
  }

  .ruler-side div {
    height: 56px;
    padding: 2px 0 0 1px;
    border-top: 1px solid #dcdcdc;
    background: linear-gradient(#dcdcdc, #dcdcdc) 100% 27px / 12px 1px no-repeat;
  }

  .ruler-side div:first-child {
    margin-top: -23px;
  }

  .ruler-side span {
    display: block;
    writing-mode: vertical-rl;
    transform: rotate(180deg);
    width: 20px;
  }

  .canvas {
    overflow: hidden;
    padding: 33px 0 0 112px;
    background: #e4e4e4;
  }

  .page {
    background: #fff;
  }

  .vscroll {
    display: grid;
    grid-template-rows: 14fr 66fr 20fr;
    padding: 0 1px;
    border-left: 1px solid #dcdcdc;
  }

  .vscroll div {
    grid-row: 2;
    border-radius: 5px;
    background: #bfbfbf;
  }

  .hscroll {
    grid-column: 1 / 3;
    padding: 1px 0;
    border: 1px solid #dcdcdc;
  }

  .hscroll div {
    width: 58%;
    height: 9px;
    margin-left: 21%;
    border-radius: 5px;
    background: #bfbfbf;
  }

  .palette {
    display: flex;
    flex: none;
    gap: 1px;
    height: 24px;
    padding: 1px 0 2px;
  }

  .palette button {
    justify-content: center;
    width: 46px;
    color: #444;
  }

  .palette .icon {
    width: 20px;
    height: 20px;
  }

  .palette i {
    flex: 1;
  }

  .side-tools {
    display: flex;
    flex-direction: column;
    flex: none;
    gap: 15px;
    width: 52px;
    border-right: 1px solid #cfcfcf;
    color: #444;
  }

  .side-tools button {
    justify-content: center;
    height: 51px;
  }

  .side-tools .collapse {
    margin-bottom: -19px;
    color: #808080;
  }

  .side-tools .active {
    background: #007fff;
    color: #fff;
  }

  .theme {
    display: flex;
    flex-direction: column;
    flex: none;
    width: 423px;
  }

  .theme h2 {
    height: 47px;
    background: #e0e0e0;
    font-size: 20px;
    font-weight: 700;
    line-height: 48px;
    text-align: center;
  }

  .theme-scroll {
    padding: 23px 22px 0;
  }

  .current {
    display: flex;
    color: #444;
  }

  .current > svg {
    border: 1px solid #dcdcdc;
    background: #fff;
  }

  .options {
    display: flex;
    flex-direction: column;
    gap: 20px;
    margin: 10px 0 0 48px;
  }

  .options button {
    gap: 20px;
    height: 28px;
  }

  .options span {
    color: #333;
  }

  .theme-tabs {
    display: flex;
    width: 376px;
    margin-top: 23px;
    color: #444;
  }

  .theme-tabs button {
    flex: 1;
    flex-direction: column;
    gap: 17px;
    height: 90px;
    padding-top: 8px;
  }

  .theme-tabs span {
    color: #000;
  }

  .theme-tabs .active {
    background: #e0e0e0;
  }

  .cards {
    display: grid;
    grid-template-columns: repeat(2, 180px);
    gap: 7px;
    margin-top: 29px;
  }

  .card {
    height: 147px;
    background: #fff;
    outline: 1px solid #dedede;
    outline-offset: -1px;
  }

  .card.active {
    outline: 3px solid #dedede;
    outline-offset: -3px;
  }

  .flow {
    width: 180px;
    height: 147px;
  }

  /* status bar */
  footer {
    display: flex;
    align-items: center;
    flex: none;
    height: 45px;
    padding-top: 3px;
    border-top: 1px solid #dcdcdc;
  }

  footer button {
    color: #444;
  }

  footer .caret {
    fill: #707070;
  }

  .page-view {
    margin-left: 26px;
  }

  .page-pick {
    justify-content: space-between;
    width: 160px;
    height: 36px;
    margin-left: 34px;
    padding-right: 7px;
    border-right: 1px solid #dcdcdc;
  }

  .page-tab {
    margin-left: 27px;
    font-weight: 700;
  }

  footer .page-pick,
  footer .page-tab,
  footer .percent {
    color: #000;
  }

  .page-add {
    margin-left: 40px;
  }

  .page-add .icon,
  .zoom .icon[width="24"] {
    width: 18px;
    height: 18px;
  }

  .zoom {
    display: flex;
    align-items: center;
    gap: 14px;
    margin-left: auto;
    padding-right: 41px;
  }

  .out {
    margin-right: -5px;
  }

  .in {
    margin-left: -4px;
  }

  .percent {
    gap: 14px;
    margin-left: 7px;
  }

  .full {
    margin: 0 -7px 0 10px;
  }

  input[type="range"] {
    appearance: none;
    width: 123px;
    height: 18px;
    margin: 0;
    background: linear-gradient(90deg, #c2c2c2 16%, #e0e0e0 16%) center / 100% 6px no-repeat;
  }

  input[type="range"]::-webkit-slider-thumb {
    appearance: none;
    width: 18px;
    height: 18px;
    border: 3px solid #c2c2c2;
    border-radius: 50%;
    background: #fff;
  }
</style>
